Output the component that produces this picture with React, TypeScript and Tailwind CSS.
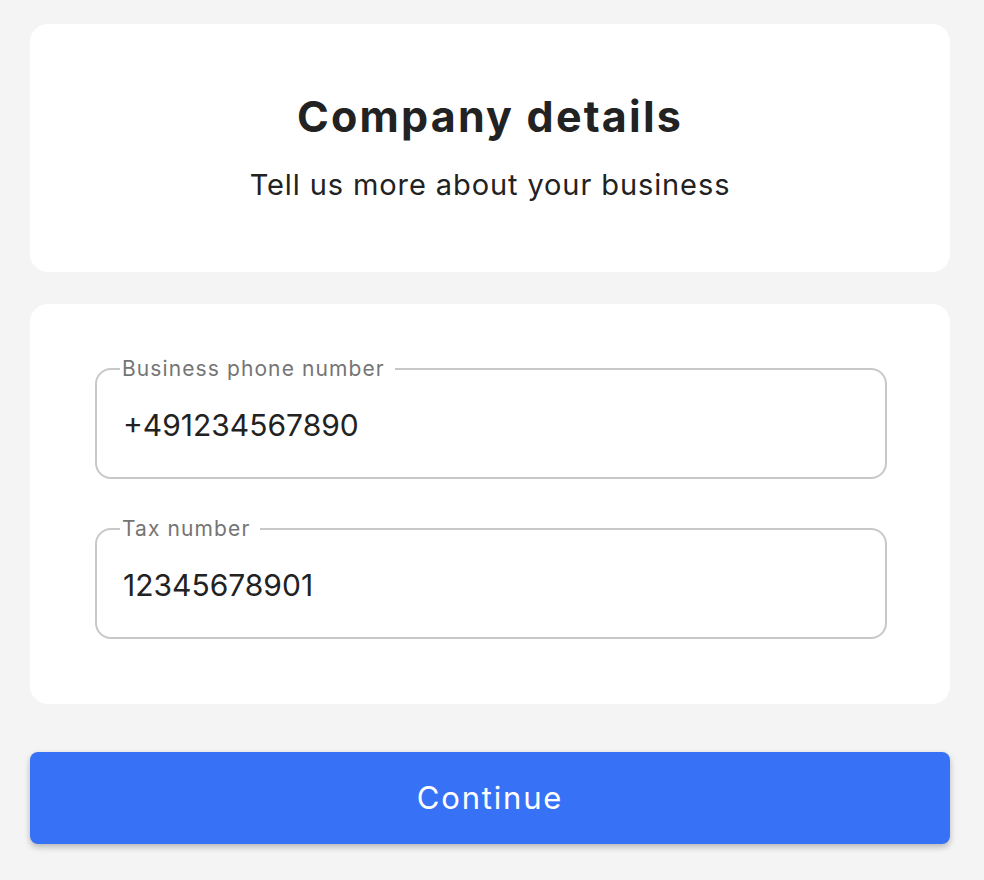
import React from "react";

function Field({ label, value }: { label: string; value: string }) {
  return (
    <fieldset className="h-[122px] rounded-[16px] border-2 border-[#c8c8c8] px-[26px] pt-0 m-0 min-w-0">
      <legend className="px-[2px] ml-[-3px] text-[21px] leading-[24px] tracking-[1.1px] text-[#757575]">
        <span className="pr-[8px]">{label}</span>
      </legend>
      <div className="mt-[26px] text-[30px] leading-[36px] text-[#222222]">{value}</div>
    </fieldset>
  );
}

export default function App() {
  return (
    <div
      className="min-h-[880px] w-full bg-[#f4f4f4] pl-[30px] pr-[34px] pt-[24px] pb-[36px]"
      style={{ fontFamily: "Inter, 'Noto Sans', sans-serif" }}
    >
      <div className="flex flex-col items-center rounded-[18px] bg-white h-[248px] pt-[66px]">
        <h1 className="text-[43px] leading-[52px] font-bold text-[#222222] tracking-[2.2px]">Company details</h1>
        <p className="mt-[25px] text-[29px] leading-[36px] tracking-[0.9px] text-[#222222]">Tell us more about your business</p>
      </div>
      <div className="mt-[32px] rounded-[18px] bg-white pl-[65px] pr-[63px] pt-[53px] pb-[65px] flex flex-col gap-[38px]">
        <Field label="Business phone number" value="+491234567890" />
        <Field label="Tax number" value="12345678901" />
      </div>
      <button className="mt-[48px] flex h-[92px] w-full items-center justify-center rounded-[8px] bg-[#3772f6] text-[31px] tracking-[1.8px] text-white shadow-[0_3px_6px_rgba(0,0,0,0.25)]">
        Continue
      </button>
    </div>
  );
}
